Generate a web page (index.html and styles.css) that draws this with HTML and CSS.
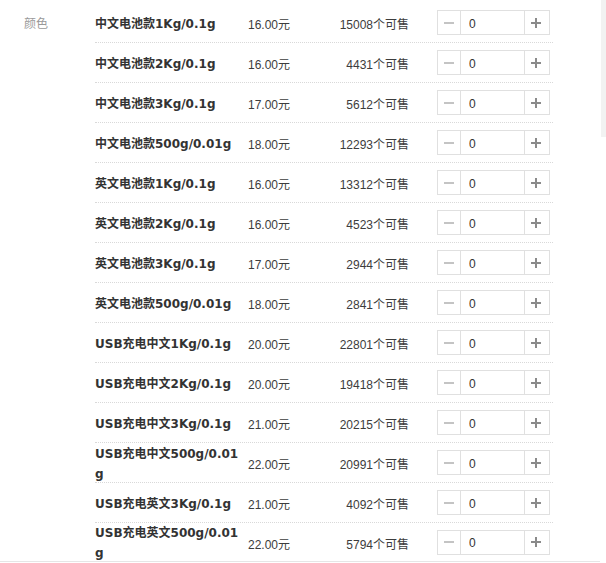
FILE: index.html
```html
<!DOCTYPE html>
<html lang="zh-CN">
<head>
    <meta charset="UTF-8">
    <title>颜色</title>
    <link rel="stylesheet" href="styles.css">
</head>
<body>
    <div class="page">
        <div class="sku-panel">
            <div class="sku-label">颜色</div>
            <div class="sku-list" id="skuList"></div>
        </div>
        <div class="side-strip"></div>
    </div>

    <script>
        const skus = [
            ['中文电池款1Kg/0.1g', '16.00', 15008],
            ['中文电池款2Kg/0.1g', '16.00', 4431],
            ['中文电池款3Kg/0.1g', '17.00', 5612],
            ['中文电池款500g/0.01g', '18.00', 12293],
            ['英文电池款1Kg/0.1g', '16.00', 13312],
            ['英文电池款2Kg/0.1g', '16.00', 4523],
            ['英文电池款3Kg/0.1g', '17.00', 2944],
            ['英文电池款500g/0.01g', '18.00', 2841],
            ['USB充电中文1Kg/0.1g', '20.00', 22801],
            ['USB充电中文2Kg/0.1g', '20.00', 19418],
            ['USB充电中文3Kg/0.1g', '21.00', 20215],
            ['USB充电中文500g/0.01g', '22.00', 20991],
            ['USB充电英文3Kg/0.1g', '21.00', 4092],
            ['USB充电英文500g/0.01g', '22.00', 5794]
        ];

        const minusIcon = '<svg width="10" height="10" viewBox="0 0 10 10"><path d="M0 5h10" stroke="#c4c4c4" stroke-width="2"/></svg>';
        const plusIcon = '<svg width="10" height="10" viewBox="0 0 10 10"><path d="M0 5h10M5 0v10" stroke="#8a8a8a" stroke-width="2"/></svg>';

        document.getElementById('skuList').innerHTML = skus
            .map(([name, price, stock]) => `
                <div class="sku-row">
                    <div class="sku-name">${name}</div>
                    <div class="sku-price">${price}元</div>
                    <div class="sku-stock">${stock}个可售</div>
                    <div class="stepper">
                        <button class="step-btn minus">${minusIcon}</button>
                        <input class="step-input" type="text" value="0">
                        <button class="step-btn plus">${plusIcon}</button>
                    </div>
                </div>`)
            .join('');
    </script>
</body>
</html>
```

FILE: styles.css
```css
* {
    margin: 0;
    padding: 0;
    box-sizing: border-box;
}

body {
    background: #fff;
    color: #333;
    font-family: 'Liberation Sans', 'Noto Sans CJK SC', sans-serif;
    font-size: 12px;
}

.page {
    display: flex;
    align-items: flex-start;
}

.sku-panel {
    display: flex;
    width: 600px;
    border-bottom: 1px solid #e6e6e6;
}

.side-strip {
    width: 5px;
    height: 137px;
    margin-left: 1px;
    background: #f2f2f2;
}

.sku-label {
    width: 95px;
    padding: 5px 0 0 24px;
    line-height: 39px;
    color: #999;
}

.sku-list {
    width: 458px;
    padding-top: 3px;
}

.sku-row {
    display: flex;
    align-items: center;
    height: 40px;
    border-bottom: 1px dotted #d9d9d9;
}

.sku-row:last-child {
    height: 38px;
    border-bottom: none;
}

.sku-name,
.sku-price,
.sku-stock {
    padding-top: 2px;
}

.sku-name {
    width: 146px;
    margin-right: 7px;
    font-family: 'DejaVu Sans', 'Noto Sans CJK SC', sans-serif;
    font-weight: bold;
    line-height: 20px;
    color: #333;
    word-break: break-all;
}

.sku-price {
    width: 80px;
    color: #3c3c3c;
}

.sku-stock {
    width: 81px;
    text-align: right;
    color: #3c3c3c;
}

.stepper {
    display: flex;
    width: 113px;
    height: 25px;
    margin-left: 28px;
    border: 1px solid #e0e0e0;
}

.step-btn {
    width: 23px;
    border: none;
    background: #fff;
    display: flex;
    justify-content: center;
    align-items: center;
    cursor: pointer;
}

.step-btn.minus {
    border-right: 1px solid #e0e0e0;
}

.step-btn.plus {
    border-left: 1px solid #e0e0e0;
}

.step-input {
    width: 63px;
    border: none;
    outline: none;
    padding: 2px 0 0 8px;
    font-family: 'Liberation Sans', sans-serif;
    font-size: 12px;
    color: #333;
}
```
